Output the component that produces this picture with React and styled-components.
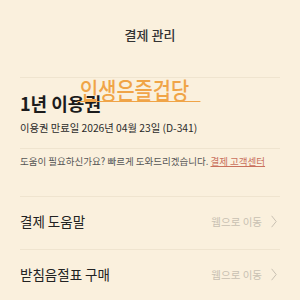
import styled, { createGlobalStyle } from "styled-components";

const GlobalStyle = createGlobalStyle`
  html, body {
    margin: 0;
    padding: 0;
    background: #faf0dd;
  }
  body {
    font-family: "Noto Sans CJK KR", "Noto Sans", sans-serif;
  }
`;

const Page = styled.div`
  position: relative;
  width: 300px;
  height: 300px;
  overflow: hidden;
  background: #faf0dd;
  color: #222;
`;

const Header = styled.div`
  height: 77px;
  display: flex;
  align-items: center;
  justify-content: center;
  padding-bottom: 8px;
  box-sizing: border-box;
  font-size: 13px;
  font-weight: 500;
  color: #333;
`;

const Body = styled.div`
  padding: 0 20px;
`;

const Divider = styled.div`
  height: 1px;
  background: #efe4cf;
`;

const Plan = styled.div`
  display: flex;
  flex-direction: column;
  padding: 13px 0 12px;
`;

const PlanTitle = styled.div`
  font-size: 18px;
  font-weight: 700;
  line-height: 24px;
  color: #1c1c1c;
`;

const PlanSub = styled.div`
  font-size: 10.3px;
  line-height: 16px;
  margin-top: 5px;
  color: #2a2a2a;
`;

const Help = styled.div`
  font-size: 9.5px;
  line-height: 14px;
  color: #555;
  padding: 5px 0 28px;
  white-space: nowrap;
`;

const HelpLink = styled.span`
  color: #c9705d;
  text-decoration: underline;
`;

const Row = styled.div`
  display: flex;
  align-items: center;
  justify-content: space-between;
  height: 52px;
  padding-bottom: 4px;
  box-sizing: border-box;
`;

const RowLabel = styled.div`
  font-size: 13.5px;
  color: #222;
`;

const RowAction = styled.div`
  display: flex;
  align-items: center;
  gap: 9px;
  font-size: 10.5px;
  color: #c8c0b2;
  margin-right: 3px;
`;

const Watermark = styled.div`
  position: absolute;
  left: 80px;
  top: 75px;
  font-size: 23px;
  font-weight: 500;
  color: #f0a447;
  line-height: 29px;
  white-space: nowrap;
  transform: scaleX(0.86);
  transform-origin: left top;

  &::after {
    content: "";
    position: absolute;
    left: -3px;
    width: 143px;
    bottom: 2px;
    height: 1.5px;
    background: #f0a447;
  }
`;

const Chevron = () => (
  <svg width="6" height="13" viewBox="0 0 6 13" fill="none">
    <path d="M0.6 0.8 L5.2 6.5 L0.6 12.2" stroke="#c8c0b2" strokeWidth="1" />
  </svg>
);

const LinkRow = ({ label }) => (
  <Row>
    <RowLabel>{label}</RowLabel>
    <RowAction>
      웹으로 이동
      <Chevron />
    </RowAction>
  </Row>
);

export default function App() {
  return (
    <Page>
      <GlobalStyle />
      <Header>결제 관리</Header>
      <Body>
        <Divider />
        <Plan>
          <PlanTitle>1년 이용권</PlanTitle>
          <PlanSub>이용권 만료일 2026년 04월 23일 (D-341)</PlanSub>
        </Plan>
        <Divider />
        <Help>
          도움이 필요하신가요? 빠르게 도와드리겠습니다.{" "}
          <HelpLink>결제 고객센터</HelpLink>
        </Help>
        <Divider />
        <LinkRow label="결제 도움말" />
        <Divider />
        <LinkRow label="받침음절표 구매" />
      </Body>
      <Watermark>인생은즐겁당</Watermark>
    </Page>
  );
}
